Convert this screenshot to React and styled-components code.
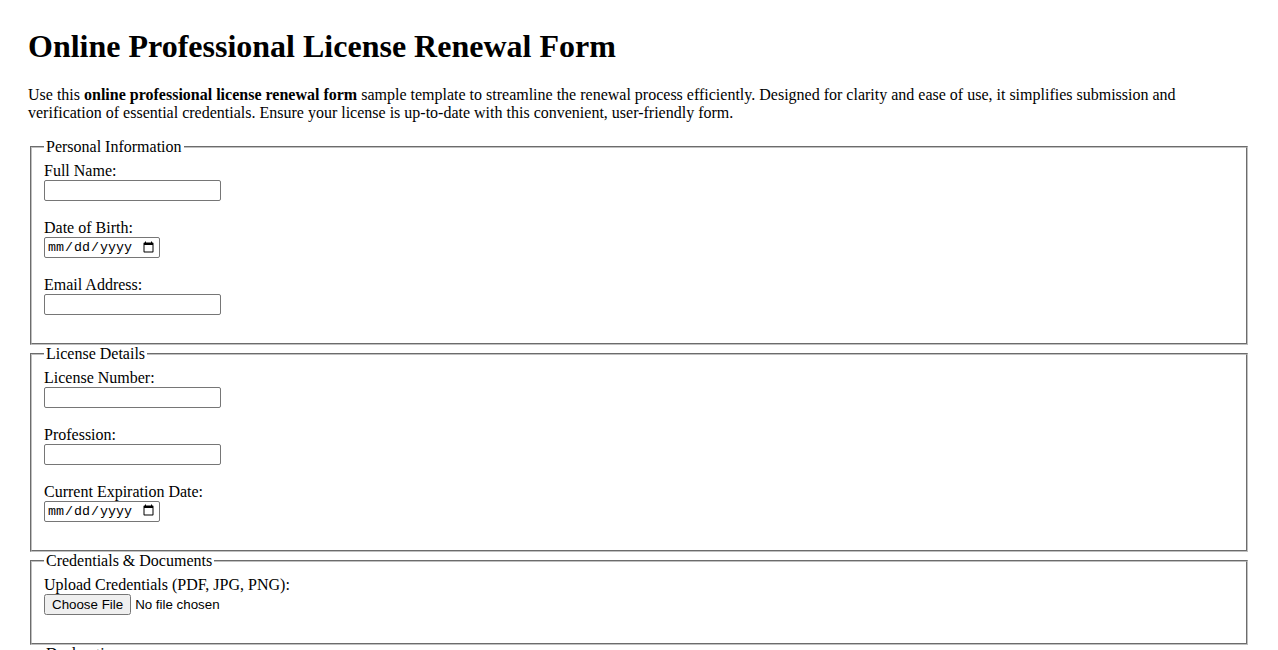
import React from "react";
import styled, { createGlobalStyle } from "styled-components";

const GlobalStyle = createGlobalStyle`
  html {
    scrollbar-width: none;
  }
  body {
    margin: 0;
    background: #fff;
    color: #000;
    font-family: "Liberation Serif", "Times New Roman", serif;
    font-size: 16px;
  }
`;

const Page = styled.div`
  padding: 28px 28px 40px;
`;

const Title = styled.h1`
  margin: 0 0 21.44px;
  font-size: 32px;
  font-weight: bold;
`;

const Intro = styled.p`
  margin: 0 0 16px;
  line-height: 18px;
`;

const Section = styled.fieldset`
  margin: 0 2px;
  padding: 5.6px 12px 10px;
  border: 2px groove rgb(192, 192, 192);
  min-width: 0;
`;

const Legend = styled.legend`
  padding: 0 2px;
  line-height: normal;
`;

const Field = styled.div`
  display: flex;
  flex-direction: column;
  align-items: flex-start;
  padding-top: ${(props) => props.$offset ?? "0"};
  margin-bottom: 18px;
`;

const Label = styled.label`
  line-height: 18px;
`;

const TextInput = styled.input`
  box-sizing: border-box;
  width: 177px;
  height: 21px;
  margin: 0;
  padding: 1px 2px;
  border: 1px solid #767676;
  border-radius: 2px;
  font-family: "Liberation Sans", Arial, sans-serif;
  font-size: 13.33px;
`;

const DateInput = styled(TextInput)`
  width: 116px;
  font-family: "Liberation Mono", "DejaVu Sans Mono", monospace;
  font-size: 13.33px;
`;

const FileInput = styled.input`
  margin: 0;
  height: 21px;
  font-family: "Liberation Sans", Arial, sans-serif;
  font-size: 13.33px;
`;

const CheckRow = styled.label`
  display: flex;
  align-items: center;
  gap: 4px;
  line-height: 18px;
`;

const Submit = styled.button`
  margin-top: 16px;
  padding: 1px 6px;
  font-family: "Liberation Sans", Arial, sans-serif;
  font-size: 13.33px;
`;

const sections = [
  {
    title: "Personal Information",
    fields: [
      { id: "fullName", label: "Full Name:", type: "text" },
      { id: "dob", label: "Date of Birth:", type: "date" },
      { id: "email", label: "Email Address:", type: "email" },
    ],
  },
  {
    title: "License Details",
    fields: [
      { id: "licenseNumber", label: "License Number:", type: "text" },
      { id: "profession", label: "Profession:", type: "text" },
      { id: "expiry", label: "Current Expiration Date:", type: "date" },
    ],
  },
  {
    title: "Credentials & Documents",
    fields: [
      {
        id: "credentials",
        label: "Upload Credentials (PDF, JPG, PNG):",
        type: "file",
      },
    ],
  },
];

const renderInput = (field) => {
  if (field.type === "date") return <DateInput id={field.id} type="date" />;
  if (field.type === "file")
    return <FileInput id={field.id} type="file" accept=".pdf,.jpg,.png" />;
  return <TextInput id={field.id} type={field.type} />;
};

const App = () => {
  return (
    <Page>
      <GlobalStyle />
      <Title>Online Professional License Renewal Form</Title>
      <Intro>
        Use this <strong>online professional license renewal form</strong>{" "}
        sample template to streamline the renewal process efficiently. Designed
        for clarity and ease of use, it simplifies submission and verification
        of essential credentials. Ensure your license is up-to-date with this
        convenient, user-friendly form.
      </Intro>
      <form>
        {sections.map((section) => (
          <Section key={section.title}>
            <Legend>{section.title}</Legend>
            {section.fields.map((field) => (
              <Field key={field.id} $offset={field.type === "file" ? "1px" : "0"}>
                <Label htmlFor={field.id}>{field.label}</Label>
                {renderInput(field)}
              </Field>
            ))}
          </Section>
        ))}
        <Section>
          <Legend>Declaration</Legend>
          <Field>
            <CheckRow>
              <input type="checkbox" />
              I hereby declare that the information provided is true and
              correct.
            </CheckRow>
          </Field>
        </Section>
        <Submit type="submit">Submit Renewal</Submit>
      </form>
    </Page>
  );
};

export default App;
